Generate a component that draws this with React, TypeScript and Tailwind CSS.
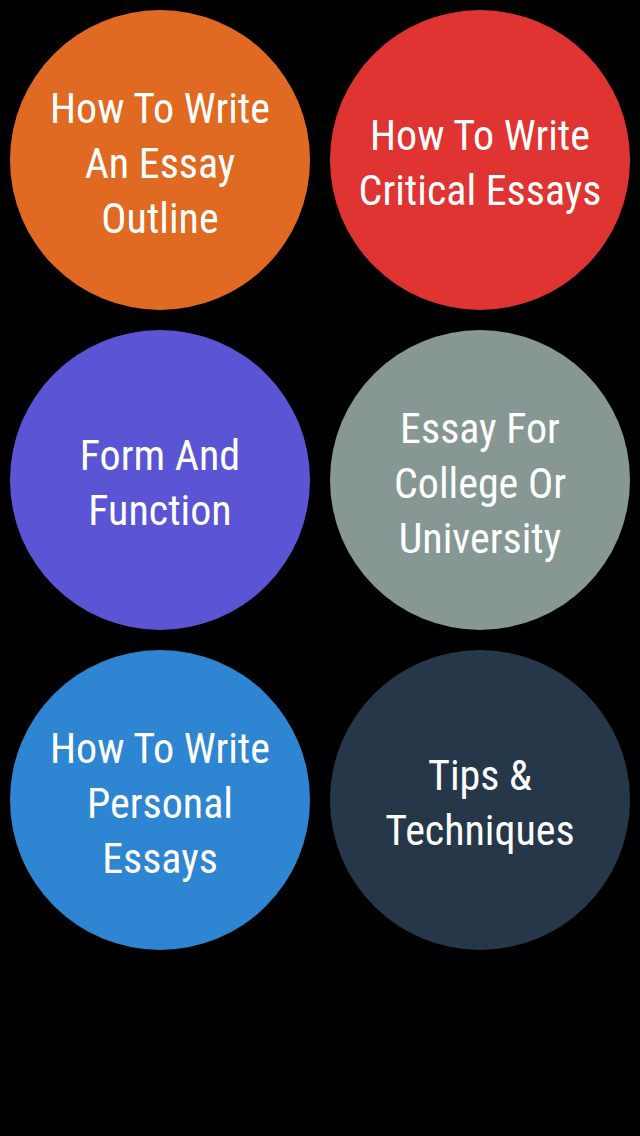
import React from "react";

const items: { lines: string[]; bg: string }[] = [
  { lines: ["How To Write", "An Essay", "Outline"], bg: "bg-[#e06a22]" },
  { lines: ["How To Write", "Critical Essays"], bg: "bg-[#df3431]" },
  { lines: ["Form And", "Function"], bg: "bg-[#5b55d6]" },
  { lines: ["Essay For", "College Or", "University"], bg: "bg-[#869794]" },
  { lines: ["How To Write", "Personal", "Essays"], bg: "bg-[#2e85d1]" },
  { lines: ["Tips &", "Techniques"], bg: "bg-[#27374a]" },
];

export default function App() {
  return (
    <div className="w-[640px] h-[1136px] bg-black pt-[10px] px-[10px]">
      <div className="grid grid-cols-2 gap-x-[20px] gap-y-[20px]">
        {items.map((it, i) => (
          <div
            key={i}
            className={`w-[300px] h-[300px] rounded-full ${it.bg} flex flex-col items-center justify-center pt-[6px] text-white text-center text-[42px] leading-[55px]`}
            style={{ fontFamily: '"Liberation Sans Narrow", "Roboto Condensed", "Liberation Sans", sans-serif' }}
          >
            {it.lines.map((l, j) => (
              <div key={j} className="whitespace-nowrap">{l}</div>
            ))}
          </div>
        ))}
      </div>
    </div>
  );
}
